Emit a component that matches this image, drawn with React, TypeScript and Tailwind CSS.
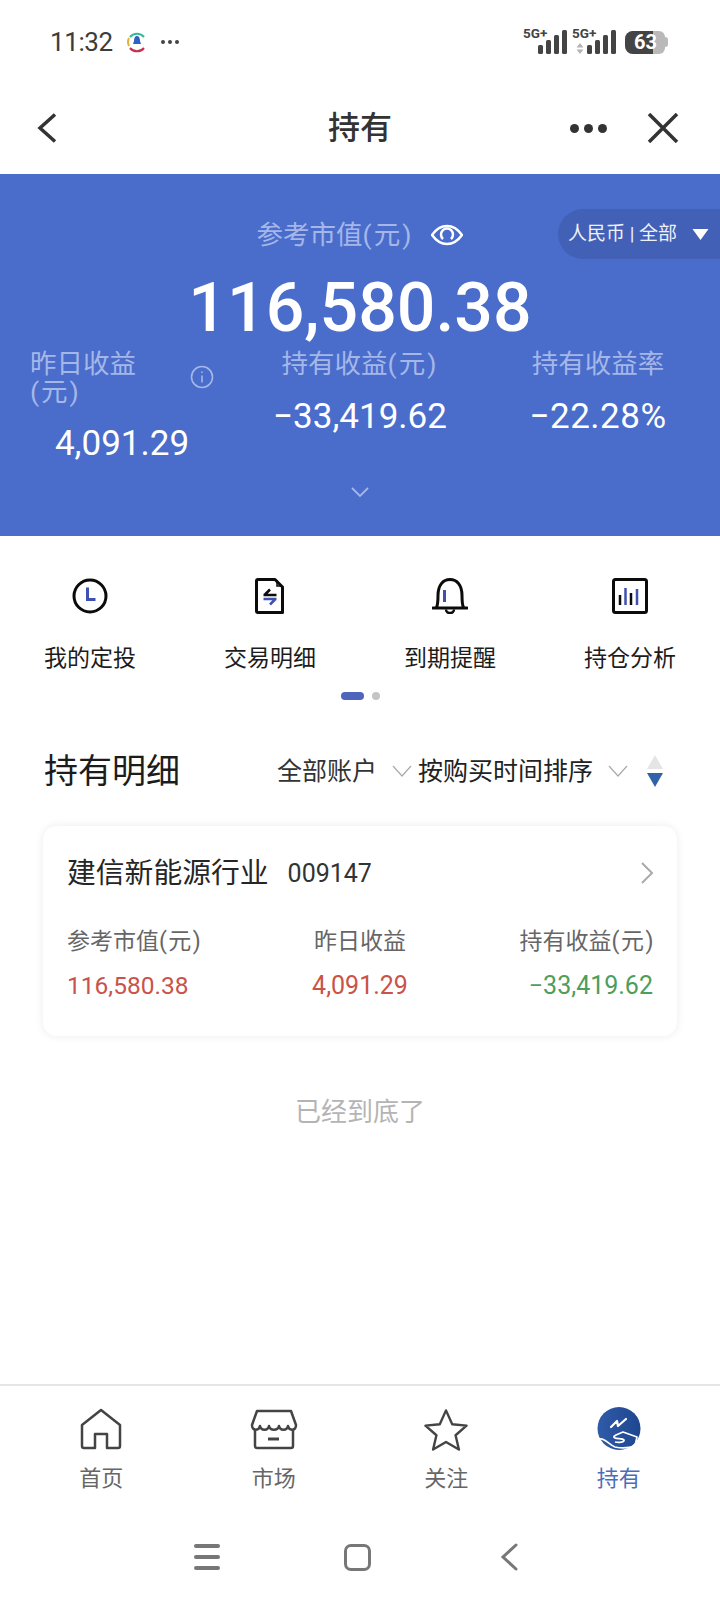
import React from "react";

const CJK = "font-['Roboto','Noto_Sans_CJK_SC',sans-serif]";

const Signal = ({ arrows }: { arrows?: boolean }) => (
  <svg width="46" height="34" viewBox="0 -6 46 34" className="block mb-[6px]">
    <text x="0" y="10" fontFamily="Roboto" fontWeight="700" fontSize="13.5" fill="#444">5G+</text>
    <rect x="15" y="17" width="5" height="9" rx="1.5" fill="#444" />
    <rect x="23" y="12" width="5" height="14" rx="1.5" fill="#444" />
    <rect x="31" y="7" width="5" height="19" rx="1.5" fill="#444" />
    <rect x="39" y="2" width="5" height="24" rx="1.5" fill="#444" />
    {arrows && <path d="M8 15l3.500 4.500h-7zM8 26l-3.500-4.500h7z" fill="#b4b4b4" />}
  </svg>
);

const Chevron = ({ className = "" }: { className?: string }) => (
  <svg width="20" height="12" viewBox="0 0 20 12" fill="none" stroke="#aaa" strokeWidth="1.2" className={className}>
    <path d="M1 1l9 10 9-10" />
  </svg>
);

const ClockIcon = () => (
  <svg width="36" height="36" viewBox="0 0 36 36" fill="none">
    <circle cx="18" cy="18" r="16" stroke="#0b0b0b" strokeWidth="3" />
    <path d="M15.500 9.500v12h8" stroke="#3f51b0" strokeWidth="3" />
  </svg>
);

const DocIcon = () => (
  <svg width="36" height="36" viewBox="0 0 36 36" fill="none">
    <path d="M6 1.500h17l7.500 7.500v25.500H6a1.500 1.500 0 0 1-1.500-1.500V3a1.500 1.500 0 0 1 1.500-1.500z" stroke="#0b0b0b" strokeWidth="3" strokeLinejoin="round" />
    <path d="M25 2v6h5" stroke="#0b0b0b" strokeWidth="1.500" />
    <path d="M11.500 17h13M18 11.500l-5 5" stroke="#0b0b0b" strokeWidth="2.500" />
    <path d="M11.500 21h13M18 26.500l5-5" stroke="#3f51b0" strokeWidth="2.500" />
  </svg>
);

const BellIcon = () => (
  <svg width="36" height="36" viewBox="0 0 36 36" fill="none">
    <path d="M1 30h34" stroke="#0b0b0b" strokeWidth="3" strokeLinecap="round" />
    <path d="M4.500 29.500c1.500-3 1.500-6 1.500-12C6 7 11 1.500 18 1.500S30 7 30 17.500c0 6 0 9 1.500 12" stroke="#0b0b0b" strokeWidth="3" />
    <path d="M14 31.500a4 3.500 0 0 0 8 0" stroke="#0b0b0b" strokeWidth="2.500" />
    <path d="M12.500 12v12" stroke="#3f51b0" strokeWidth="3" />
  </svg>
);

const ChartIcon = () => (
  <svg width="36" height="36" viewBox="0 0 36 36" fill="none">
    <rect x="1.500" y="1.500" width="33" height="33" rx="2" stroke="#0b0b0b" strokeWidth="3" />
    <path d="M8 17v10M19 15v12" stroke="#0b0b0b" strokeWidth="2.500" />
    <path d="M13.500 10v17M25 11v16" stroke="#3f51b0" strokeWidth="2.500" />
  </svg>
);

const HouseIcon = () => (
  <svg width="42" height="42" viewBox="0 0 42 42" fill="none" stroke="#444" strokeWidth="2.500" strokeLinejoin="round">
    <path d="M21 2L40 17v21a2 2 0 0 1-2 2H27V26H15v14H4a2 2 0 0 1-2-2V17z" />
  </svg>
);

const StoreIcon = () => (
  <svg width="48" height="42" viewBox="0 0 48 42" fill="none" stroke="#444" strokeWidth="2.500" strokeLinejoin="round">
    <path d="M7 3h34l5 14c0 6-7 6-8 1-1 5-8 5-9 0-1 5-9 5-10 0-1 5-8 5-9 0-1 5-8 5-8-1z" />
    <path d="M5 21v17a2 2 0 0 0 2 2h34a2 2 0 0 0 2-2V21" />
    <path d="M18 31h11" strokeWidth="3" />
  </svg>
);

const StarIcon = () => (
  <svg width="44" height="43" viewBox="0 0 46 44" fill="none" stroke="#444" strokeWidth="2.500" strokeLinejoin="round">
    <path d="M23 2l6.500 14.500 15 1.500-11.500 10 3.500 15L23 35 9.500 43 13 28 1.500 18l15-1.500z" />
  </svg>
);

const HoldLogo = () => (
  <svg width="44" height="44" viewBox="0 0 44 44" fill="none">
    <defs>
      <linearGradient id="hold" x1="0" x2="1" y1="0" y2="0">
        <stop offset="0" stopColor="#2f5ba8" />
        <stop offset="1" stopColor="#1f4690" />
      </linearGradient>
    </defs>
    <circle cx="22" cy="21.500" r="21.500" fill="url(#hold)" />
    <path d="M14 20l6-6 1 5 8-7" stroke="#fff" strokeWidth="2.200" strokeLinecap="round" strokeLinejoin="round" />
    <path d="M3 32c5-1 9 6 15 8 5 1 14 1 20-1l2-9-14-5-7 3c-2 1-3 2-1 3 2 1 8 0 9 2s-5 3-9 2" stroke="#fff" strokeWidth="1.700" strokeLinejoin="round" />
  </svg>
);

const shortcuts = [
  { label: "我的定投", icon: <ClockIcon /> },
  { label: "交易明细", icon: <DocIcon /> },
  { label: "到期提醒", icon: <BellIcon /> },
  { label: "持仓分析", icon: <ChartIcon /> },
];

const tabs = [
  { label: "首页", icon: <HouseIcon /> },
  { label: "市场", icon: <StoreIcon /> },
  { label: "关注", icon: <StarIcon /> },
  { label: "持有", icon: <HoldLogo />, active: true },
];

export default function App() {
  return (
    <div className={`w-[720px] h-[1600px] bg-white flex flex-col overflow-hidden ${CJK}`}>
      {/* status bar */}
      <div className="h-[84px] shrink-0 flex items-center pl-[50px] pr-[52px]">
        <span className="text-[26px] text-[#3c3c3c] tracking-[-0.4px]">11:32</span>
        <svg width="22" height="26" viewBox="0 0 22 26" fill="none" className="ml-[13px]">
          <path d="M4 8a9 9 0 0 1 14 0" stroke="#35b89a" strokeWidth="2" />
          <path d="M3 9a9 9 0 0 0 0 8" stroke="#e3b23c" strokeWidth="2" />
          <path d="M4 19a9 9 0 0 0 14 0" stroke="#c5304e" strokeWidth="2" />
          <path d="M11 7c2 0 3 2 3 5l1 3H7l1-3c0-3 1-5 3-5z" fill="#2b62c4" />
        </svg>
        <div className="ml-[13px] flex gap-[3px]">
          <span className="w-[4px] h-[4px] rounded-full bg-[#444]" />
          <span className="w-[4px] h-[4px] rounded-full bg-[#444]" />
          <span className="w-[4px] h-[4px] rounded-full bg-[#444]" />
        </div>
        <div className="ml-auto flex items-center gap-[3px]">
          <Signal />
          <Signal arrows />
          <div className="ml-[4px] flex items-center">
            <div className="relative w-[40px] h-[23px] rounded-l-[8px] rounded-r-[6px] overflow-hidden bg-[#b9b9b9]">
              <div className="w-[28px] h-full bg-[#444]" />
              <span className="absolute left-[9px] top-0 text-[20px] leading-[23px] font-bold text-white">63</span>
            </div>
            <span className="w-[3px] h-[10px] rounded-r-full bg-[#b9b9b9]" />
          </div>
        </div>
      </div>

      {/* nav */}
      <div className="h-[90px] shrink-0 grid grid-cols-[1fr_auto_1fr] items-center px-[43px] pb-[2px]">
        <svg width="20" height="30" viewBox="0 0 20 30" fill="none" stroke="#333" strokeWidth="3.500" className="ml-[-6px]">
          <path d="M18 1.500L3 15l15 13.500" />
        </svg>
        <span className="text-[32px] font-medium text-[#333] leading-none">持有</span>
        <div className="flex items-center justify-end gap-[40px] mr-[-2px]">
          <div className="flex gap-[5px]">
            <span className="w-[9px] h-[9px] rounded-full bg-[#333]" />
            <span className="w-[9px] h-[9px] rounded-full bg-[#333]" />
            <span className="w-[9px] h-[9px] rounded-full bg-[#333]" />
          </div>
          <svg width="32" height="30" viewBox="0 0 32 30" fill="none" stroke="#333" strokeWidth="3.500">
            <path d="M2 1l28 28M30 1L2 29" />
          </svg>
        </div>
      </div>

      {/* summary */}
      <div className="h-[362px] shrink-0 relative bg-[#4a6dcb] flex flex-col items-center pt-[44px]">
        <div className="absolute top-[35px] right-0 h-[50px] w-[162px] rounded-l-[25px] bg-[#4260b6] flex items-center pl-[10px] gap-[15px]">
          <span className="text-[19px] text-[#eef1fb] whitespace-nowrap">人民币 | 全部</span>
          <svg width="17" height="11" viewBox="0 0 16 11">
            <path d="M0 0h16L8 11z" fill="#fff" />
          </svg>
        </div>
        <div className="h-[34px] flex items-center gap-[18px]">
          <span className="text-[26.500px] text-[#a5b7e8] leading-none">
            参考市值<span className="tracking-[2px]">(元)</span>
          </span>
          <svg width="32" height="24" viewBox="0 0 32 24" fill="none" stroke="#fff" strokeWidth="2.500">
            <path d="M1 12C6 5 11 3 16 3s10 2 15 9c-5 7-10 9-15 9S6 19 1 12z" />
            <path d="M12 16a6 6 0 1 1 8 0" />
          </svg>
        </div>
        <div className="mt-[21px] h-[70px] text-[68px] leading-[70px] font-medium text-white">116,580.38</div>

        <div className="mt-[7px] w-full px-[3px] grid grid-cols-3">
          <div className="flex flex-col items-center">
            <div className="w-[184px] h-[56px] flex items-center justify-between">
              <span className="w-[108px] text-[26.500px] leading-[28px] text-[#a5b7e8]">
                昨日收益<span className="tracking-[2px]">(元)</span>
              </span>
              <svg width="24" height="24" viewBox="0 0 24 24" fill="none" stroke="#a5b7e8" strokeWidth="1.600" className="mt-[-2px]">
                <circle cx="12" cy="12" r="10.500" />
                <path d="M12 10.500v7M12 6.500v1.500" />
              </svg>
            </div>
            <div className="mt-[18px] text-[35px] leading-[40px] text-white">4,091.29</div>
          </div>
          <div className="flex flex-col items-center">
            <span className="text-[26.500px] leading-[28px] text-[#a5b7e8]">
              持有收益<span className="tracking-[2px]">(元)</span>
            </span>
            <div className="mt-[19px] text-[35px] leading-[40px] text-white">−33,419.62</div>
          </div>
          <div className="flex flex-col items-center">
            <span className="text-[26.500px] leading-[28px] text-[#a5b7e8]">持有收益率</span>
            <div className="mt-[19px] text-[35px] leading-[40px] tracking-[0.5px] text-white">−22.28%</div>
          </div>
        </div>

        <svg width="18" height="11" viewBox="0 0 18 11" fill="none" stroke="#a5b7e8" strokeWidth="1.800" className="mt-[23px]">
          <path d="M1 1l8 8 8-8" />
        </svg>
      </div>

      {/* shortcuts */}
      <div className="pt-[42px] grid grid-cols-4 shrink-0">
        {shortcuts.map((s) => (
          <div key={s.label} className="flex flex-col items-center">
            {s.icon}
            <span className="mt-[30px] text-[23px] leading-[30px] text-[#1c1c1c]">{s.label}</span>
          </div>
        ))}
      </div>
      <div className="mt-[18px] flex justify-center gap-[8px] shrink-0">
        <span className="w-[23px] h-[8px] rounded-full bg-[#4f64bd]" />
        <span className="w-[8px] h-[8px] rounded-full bg-[#c4c4c4]" />
      </div>

      {/* holdings */}
      <div className="mt-[51px] h-[40px] shrink-0 flex items-center pl-[44px] pr-[57px]">
        <span className="text-[34px] text-[#1c1c1c] leading-none">持有明细</span>
        <span className="ml-auto text-[25px] text-[#333] leading-none">全部账户</span>
        <Chevron className="ml-[15px]" />
        <span className="ml-[6px] text-[25px] text-[#222] leading-none">按购买时间排序</span>
        <Chevron className="ml-[15px]" />
        <div className="ml-[19px] flex flex-col gap-[4px]">
          <svg width="16" height="14" viewBox="0 0 16 14"><path d="M8 0l8 14H0z" fill="#e5e5e5" /></svg>
          <svg width="16" height="14" viewBox="0 0 16 14"><path d="M0 0h16L8 14z" fill="#2f62a8" /></svg>
        </div>
      </div>

      <div className="mt-[35px] mx-[43px] h-[210px] shrink-0 rounded-[14px] bg-white shadow-[0_0_10px_rgba(0,0,0,0.08)] px-[24px] pt-[29px]">
        <div className="h-[36px] flex items-center">
          <span className="text-[28.800px] text-[#262626] leading-none">建信新能源行业</span>
          <span className="ml-[19px] text-[25px] text-[#333] leading-none">009147</span>
          <svg width="14" height="22" viewBox="0 0 14 22" fill="none" stroke="#aaa" strokeWidth="2" className="ml-auto mr-[-1px]">
            <path d="M2 1l10 10L2 21" />
          </svg>
        </div>
        <div className="mt-[36px] grid grid-cols-3">
          <div>
            <div className="text-[23px] leading-[30px] text-[#666]">
              参考市值<span className="tracking-[1.500px]">(元)</span>
            </div>
            <div className="mt-[14px] text-[24.500px] leading-[30px] text-[#c9534a]">116,580.38</div>
          </div>
          <div className="text-center">
            <div className="text-[23px] leading-[30px] text-[#666]">昨日收益</div>
            <div className="mt-[14px] text-[25px] leading-[30px] text-[#c9534a]">4,091.29</div>
          </div>
          <div className="text-right">
            <div className="text-[23px] leading-[30px] text-[#666] mr-[-2px]">
              持有收益<span className="tracking-[1.500px]">(元)</span>
            </div>
            <div className="mt-[14px] text-[25px] leading-[30px] text-[#4d9e5a]">−33,419.62</div>
          </div>
        </div>
      </div>

      <div className="mt-[61px] text-center text-[26px] leading-[30px] text-[#b4b4b4] shrink-0">已经到底了</div>

      {/* tab bar */}
      <div className="mt-auto h-[216px] shrink-0 border-t-2 border-[#e6e6e6] flex flex-col">
        <div className="px-[15px] pt-[20px] grid grid-cols-4">
          {tabs.map((t) => (
            <div key={t.label} className="flex flex-col items-center">
              <div className="h-[46px] flex items-center justify-center">{t.icon}</div>
              <span className={`mt-[12px] text-[22px] leading-[30px] ${t.active ? "text-[#4a6dbb]" : "text-[#666]"}`}>
                {t.label}
              </span>
            </div>
          ))}
        </div>
        <div className="mt-[49px] flex items-center justify-center h-[28px] pr-[8px]">
          <div className="flex flex-col gap-[7px] w-[26px]">
            <span className="h-[4px] rounded-full bg-[#777]" />
            <span className="h-[4px] rounded-full bg-[#777]" />
            <span className="h-[4px] rounded-full bg-[#777]" />
          </div>
          <div className="ml-[124px] w-[27px] h-[27px] rounded-[7px] border-[3px] border-[#777]" />
          <svg width="18" height="28" viewBox="0 0 18 28" fill="none" stroke="#777" strokeWidth="3" strokeLinecap="round" className="ml-[129px]">
            <path d="M16 2L3 14l13 12" />
          </svg>
        </div>
      </div>
    </div>
  );
}
